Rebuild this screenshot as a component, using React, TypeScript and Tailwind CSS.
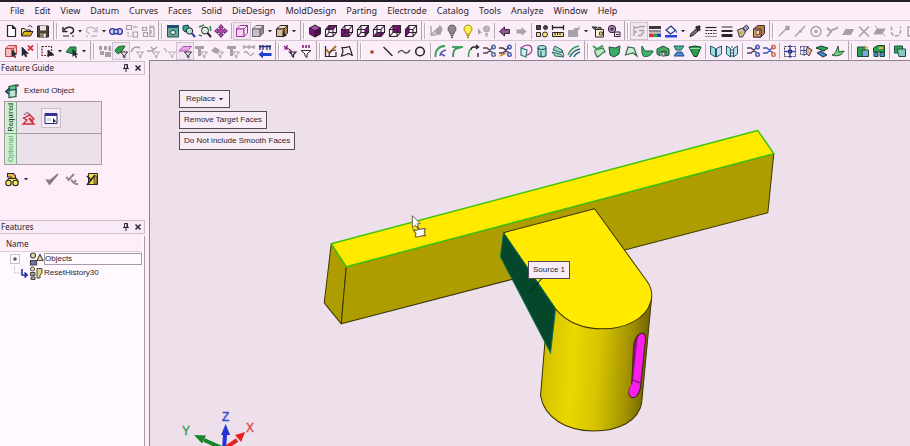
import type { ReactNode } from "react";
import clsx from "clsx";

const MENUS = [
  "File", "Edit", "View", "Datum", "Curves", "Faces", "Solid", "DieDesign",
  "MoldDesign", "Parting", "Electrode", "Catalog", "Tools", "Analyze", "Window", "Help",
];

const GRAY = "#a79fa8";
const INK = "#2c2430";
const PURPLE = "#7d1377";
const GREEN = "#2f9e50";
const BLUE = "#3546a8";

const cursor = <path d="M8.500 6v8l2-1.800 1.300 2.800 1.300-.6-1.300-2.600h2.400z" fill={INK} />;

function funnel(color: string) {
  return <path d="M7.500 9h7l-2.600 3v3l-1.600-1v-2z" fill="#fdf3fb" stroke={color} />;
}

// wireframe cube with one face filled
function faceCube(face: string) {
  return (
    <g stroke={INK} strokeWidth="1.100" fill="none">
      <path d={face} fill={PURPLE} stroke="none" />
      <path d="M2.500 6.500h7.500v7h-7.500zM6 2.500h7.500v7H6zM2.500 6.500L6 2.500M10 6.500l3.500-4M10 13.500l3.500-4M2.500 13.500L6 9.500" />
    </g>
  );
}

function cube(top: string, left: string, right: string, line: string) {
  return (
    <g stroke={line} strokeWidth="1">
      <path d="M2.500 6l3.500-3.500h7.500L10 6z" fill={top} />
      <path d="M2.500 6H10v7.500H2.500z" fill={left} />
      <path d="M10 6l3.500-3.500V10L10 13.500z" fill={right} />
    </g>
  );
}

function bulb(fill: string, line: string) {
  return (
    <g>
      <path d="M8 2a4 4 0 0 0-2.400 7.200L6.200 11h3.600l.6-1.800A4 4 0 0 0 8 2z" fill={fill} stroke={line} />
      <path d="M6.500 12.500h3M7 14.500h2" stroke={line} strokeWidth="1.400" />
    </g>
  );
}

function scissors(blade: string, handle: string) {
  return (
    <g fill="none" strokeWidth="1.400">
      <path d="M2 5h4l6 5M2 10h4l6-6" stroke={blade} />
      <circle cx="12.500" cy="4" r="1.800" stroke={handle} />
      <circle cx="12.500" cy="11.500" r="1.800" stroke={handle} />
    </g>
  );
}

const ICONS: Record<string, ReactNode> = {
  file: <path d="M4.500 2.500h5l3 3v8h-8zM9.500 2.500v3h3" fill="#fff" stroke={INK} strokeWidth="1.200" />,
  open: (
    <g stroke={INK}>
      <path d="M2.500 13V5.500h3l1 1.500h5v2" fill="#f5e58c" />
      <path d="M2.500 13l2.500-4.500h9L11.500 13z" fill="#d8b21e" />
      <path d="M9 4c1.500-2 3.500-1.500 4 .5" fill="none" />
    </g>
  ),
  save: (
    <g>
      <path d="M2.500 3h11v11h-11z" fill="#46413a" stroke={INK} />
      <path d="M5 3h6v4.500H5z" fill="#e8e3dc" />
      <path d="M5 10h6v4H5z" fill="#8c8460" />
      <path d="M9 11h1.500v3H9z" fill="#fff" />
    </g>
  ),
  undo: (
    <g fill="none" stroke={INK} strokeWidth="1.500">
      <path d="M4 7.500C6 3 13 3.500 13.500 7c.3 2-1.500 3.500-3.500 3.500" />
      <path d="M3 4v4.500h4.500" />
      <path d="M3 13h6M12 13h2" stroke="#6e6670" />
    </g>
  ),
  redo: (
    <g fill="none" stroke="#c6bbc6" strokeWidth="1.400">
      <path d="M12 7.500C10 3 3 3.500 2.500 7c-.3 2 1.500 3.500 3.500 3.500" />
      <path d="M13 4v4.500H8.500" />
      <path d="M2 13h2M7 13h6" />
    </g>
  ),
  link: (
    <g fill="#cfd4f4" stroke="#31349a" strokeWidth="1.300">
      <circle cx="4.500" cy="8.500" r="2.900" />
      <circle cx="11.500" cy="8.500" r="2.900" />
      <circle cx="8" cy="8.500" r="2.200" />
    </g>
  ),
  copyGray: (
    <g fill="none" stroke={GRAY} strokeWidth="1.200">
      <path d="M2.500 2.500h5v4h-5zM9 9h4.500v5H9z" />
      <path d="M9 4h5M4 9v4h3M11 3v3" strokeDasharray="2 1" />
    </g>
  ),
  treeGray: (
    <g fill="none" stroke={GRAY} strokeWidth="1.200">
      <path d="M2.500 4.500h4v3h-4zM3.500 9.500h4v4h-4zM10 4.500h4v9h-4z" />
      <path d="M9 3h5M11 7v4" />
    </g>
  ),
  fit: (
    <g>
      <path d="M2.500 2.500h11v11.500h-11z" fill="#6ea597" stroke="#1b5a5c" />
      <path d="M2 2h12v3H2z" fill="#1d4f72" />
      <circle cx="8" cy="9.500" r="2.300" fill="#e8fbf0" stroke="#154c4c" />
    </g>
  ),
  zoomShade: (
    <g>
      <path d="M2 3l5-1 2 4-5 3-2-2z" fill="#38a58a" stroke="#174b4a" />
      <circle cx="8.500" cy="8" r="3.200" fill="#a7e2d1" stroke={INK} />
      <path d="M11 10.500l3 3.500" stroke={BLUE} strokeWidth="2.200" />
    </g>
  ),
  zoomArea: (
    <g fill="none" stroke={INK}>
      <path d="M2 4l5-2M2 12l3 1M13 3l1 5" stroke="#2d8f56" strokeWidth="1.600" />
      <circle cx="8" cy="7.500" r="3.500" fill="#d9f2e0" />
      <path d="M10.500 10l3.500 4" strokeWidth="2" />
    </g>
  ),
  pan: (
    <g fill="#b64bb2" stroke="#4a1a55" strokeWidth=".8">
      <path d="M8 1.500l2.500 3h-1.300v2.300h2.300V5.500l3 2.500-3 2.500V9.200H9.200v2.300h1.300l-2.500 3-2.500-3h1.300V9.200H4.500v1.300L1.500 8l3-2.500v1.300h2.300V4.500H5.500z" />
    </g>
  ),
  wire: cube("#fdeefa", "#f6d8f2", "#fdeefa", "#a0309b"),
  shaded: cube("#e4dfe4", "#c7c0c8", "#8f8791", "#6e6670"),
  pickBox: (
    <g>
      {cube("#f7dcb8", "#dcbd95", "#b08a55", INK)}
      <path d="M8.500 7.500v7l2-1.500h2.500z" fill={INK} />
    </g>
  ),
  iso: (
    <g stroke={INK}>
      <path d="M8 2l5.500 3L8 8 2.500 5z" fill="#a94ba4" />
      <path d="M2.500 5L8 8v6l-5.500-3z" fill={PURPLE} />
      <path d="M13.500 5L8 8v6l5.500-3z" fill="#560b55" />
    </g>
  ),
  top: faceCube("M2.500 6.500L6 2.500h7.500l-3.500 4z"),
  front: faceCube("M2.500 6.500H10v7H2.500z"),
  right: faceCube("M10 6.500l3.500-4v7l-3.500 4z"),
  bottom: faceCube("M2.500 13.500L6 9.500h7.500l-3.500 4z"),
  back: faceCube("M6 2.500h7.500v7H6z"),
  left: faceCube("M2.500 6.500L6 2.500v7l-3.500 4z"),
  axesGray: (
    <g fill="none" stroke={GRAY} strokeWidth="1.300">
      <path d="M3 3v9h5M3 12l5-5" />
      <path d="M8 8c1-4 3-2 4-5l2 3-2 5H8z" fill={GRAY} />
    </g>
  ),
  bulbOff: bulb("#8d858f", "#5e5660"),
  bulbOn: bulb("#fff04a", "#a4890f"),
  bulbPick: (
    <g>
      <path d="M2 5v7l2-2h2z" fill={GRAY} />
      <circle cx="10.500" cy="6" r="3" fill="#bfb5c0" stroke={GRAY} />
      <path d="M9 11h3M9.500 13h2" stroke={GRAY} strokeWidth="1.300" />
    </g>
  ),
  prev: <path d="M2.500 8.500L7.500 4v2.500h5v4h-5V13z" fill="#8d5a8b" stroke="#3f2344" />,
  next: <path d="M13.500 8.500L8.500 4v2.500h-5v4h5V13z" fill="#a9a0aa" />,
  swap: (
    <g stroke={INK}>
      <path d="M2.500 2.500h4v4h-4z" fill="#4b4550" />
      <circle cx="11.500" cy="4.500" r="2" fill="#4b4550" />
      <path d="M2.500 9.500h4v4h-4z" fill="#f5e26a" />
      <circle cx="11" cy="11.500" r="2.500" fill="#f5e26a" />
    </g>
  ),
  measure: (
    <g>
      <path d="M2.500 2v5M13.500 2v5M3 4.500h10" stroke={INK} strokeWidth="1.300" />
      <path d="M2.500 9.500h11v4h-11z" fill="#f3e08a" stroke={INK} />
      <path d="M5 10v2M7.500 10v2M10 10v2" stroke={INK} />
    </g>
  ),
  blockGray: <path d="M2 7h5l1.500-2h3l2-2.500V7H12v7H2z" fill="#a9a1aa" />,
  paste: (
    <g stroke={INK}>
      <path d="M2 4h5l-2 2.500z" fill="#2d8f56" />
      <path d="M5.500 6.500h8v7.500h-8z" fill="#fbf3d6" />
      <path d="M8 4.500h3v2H8z" fill="#cfae45" />
      <path d="M9.500 9h3v3h-3z" fill="#e6cf6f" strokeWidth=".8" />
    </g>
  ),
  inspect: (
    <g stroke={INK}>
      <circle cx="6" cy="6" r="3.700" fill="#b68ac0" />
      <path d="M4 6h4M6 4v4" />
      <path d="M8.500 9h5.500v4.500H8.500z" fill="#e9ddec" />
      <path d="M10 11.500h3" stroke={PURPLE} />
    </g>
  ),
  filterGray: (
    <g fill="none" stroke={GRAY} strokeWidth="1.300">
      <path d="M3 3v10M3 4.500h5M3 9h3" />
      <path d="M8 3.500h6M8 7.500h5M7 12.500h3l3-4" />
    </g>
  ),
  palette: (
    <g>
      <path d="M2 3h12v3H2z" fill="#3c363d" />
      <path d="M2 7h12v2.500H2z" fill="#8e8890" />
      <path d="M2 10.500h4V14H2z" fill="#d63434" />
      <path d="M6 10.500h4V14H6z" fill="#2fa34b" />
      <path d="M10 10.500h4V14h-4z" fill="#2e46c5" />
    </g>
  ),
  bucket: (
    <g>
      <path d="M3 7l5-4 4.500 4.500L7.500 11z" fill="#f0f2ff" stroke="#27337f" strokeWidth="1.200" />
      <path d="M12 6c2 1.500 2.500 3 1.500 4.500z" fill="#2e46c5" />
      <path d="M2 12h12v2.500H2z" fill="#2946d8" />
    </g>
  ),
  dropper: (
    <g>
      <path d="M3 13.500l1-3 5-4.500 2 2-5 4.500z" fill="#77707a" stroke={INK} />
      <path d="M9 3.500l4 4M10.500 5.500L13 3" stroke={INK} strokeWidth="2.600" />
    </g>
  ),
  lineStyle: (
    <g stroke={INK} strokeWidth="1.200">
      <path d="M2.500 4.500h11" />
      <path d="M2.500 7.500h11" strokeDasharray="3 1" />
      <path d="M2.500 10.500h11" strokeDasharray="1.500 1" />
      <path d="M2.500 13.500h11" strokeDasharray="1 1" />
    </g>
  ),
  lineWeight: (
    <g stroke={INK}>
      <path d="M2.500 4h11" />
      <path d="M2.500 8h11" strokeWidth="2" />
      <path d="M2.500 12.500h11" strokeWidth="3" />
    </g>
  ),
  brush: (
    <g stroke={INK} strokeWidth=".9">
      <path d="M2.500 7l5-2 3 4-3 5h-3z" fill="#c9bfa8" />
      <path d="M8 5l3.500-3L14 5l-3.500 3.500z" fill="#8fa2c2" />
      <path d="M5 9l2 2" stroke="#d0a72c" strokeWidth="2" />
    </g>
  ),
  gold: (
    <g stroke="#3b2a44">
      <path d="M2.500 6l4-3.500h7v8L10 14H2.500z" fill="#b97c35" />
      <path d="M2.500 6H10v8H2.500z" fill="#eba24a" />
      <path d="M5 7.500h3.500v4H5z" fill="#fbdba3" stroke="#5d5580" />
    </g>
  ),
  snapEnd: <path d="M3 13l8-8M10 3.500h3v3h-3z" stroke={GRAY} fill={GRAY} strokeWidth="1.300" />,
  snapMid: <path d="M3 13.500L13 3M7 7.500l3 2" stroke={GRAY} strokeWidth="1.400" fill="none" />,
  snapCenter: (
    <g>
      <circle cx="8" cy="8.500" r="5" fill="none" stroke={GRAY} strokeWidth="1.400" />
      <path d="M6.500 7h3v3h-3z" fill={GRAY} />
    </g>
  ),
  snapOn: <path d="M3 13c3-1 3-5 5-6s4 0 6-3M3 5l5 4" stroke={GRAY} strokeWidth="1.800" fill="none" />,
  snapFace: <path d="M2 12l3.500-6H14l-3 6z" fill={GRAY} />,
  snapCross: <path d="M3 3.500l10 10M13 3.500l-10 10" stroke={GRAY} strokeWidth="1.600" />,
  snapPierce: <path d="M2 11l3-5h8l-3 5zM3 3l10 10" fill={GRAY} stroke={GRAY} />,
  snapArc: <path d="M3.500 3.500v5c0 6 9 6 9 0v-5" stroke={GRAY} strokeWidth="1.500" strokeDasharray="4 1.500" fill="none" />,
  snapBox: <path d="M4 4h9v9H4z" stroke={GRAY} strokeWidth="1.400" fill="none" />,

  pickAll: (
    <g>
      <path d="M2.500 5.500l3-3h8v8l-3 3h-8zM2.500 5.500h8v8M10.500 5.500l3-3" fill="#f5bcbc" stroke="#cf4242" />
      {cursor}
    </g>
  ),
  unpick: (
    <g>
      <path d="M3 4v9l2-2 1.500 3 1.500-.7-1.400-2.800h2.800z" fill={INK} stroke={INK} strokeWidth=".6" />
      <path d="M9 2.500l5 5M14 2.500l-5 5" stroke="#d23b3b" strokeWidth="1.800" />
    </g>
  ),
  pickRect: (
    <g>
      <path d="M2 3.500h9.500v9H2z" fill="none" stroke="#6d2b3a" strokeWidth="1.200" strokeDasharray="2 1" />
      <path d="M8 7v7l2-2h4z" fill={INK} stroke={INK} />
    </g>
  ),
  pickFace: (
    <g>
      <path d="M2 9l4-5h6v5l-3 2z" fill={GREEN} stroke="#176b36" />
      {cursor}
    </g>
  ),
  blocksGray: <path d="M2 3h3v4H2zM7 3h3v4H7zM11.500 3h2.500v5h-2.500zM3 8h4v4H3zM8 9h6v5H8z" fill={GRAY} />,
  filterGreen: <g><path d="M2 8c2-5 5-5 10-5l-3 5-4 3z" fill={GREEN} stroke="#176b36" />{funnel(INK)}</g>,
  filterCurve: <g><path d="M2 9c2-5 5-6 9-4" fill="none" stroke={GRAY} strokeWidth="1.500" />{funnel(GRAY)}</g>,
  filterEdge: <g><path d="M2 8h5l5-4M6 4l3 3" fill="none" stroke={GRAY} strokeWidth="1.500" />{funnel(GRAY)}</g>,
  filterPoint: <g><path d="M3 5l3 4" fill="none" stroke="#c5bbc6" strokeWidth="1.500" />{funnel("#b9afba")}</g>,
  filterPink: <g><path d="M2 8l4-4.500h8.500l-4 4.500z" fill="#e7a6e6" stroke="#b351b3" />{funnel(INK)}</g>,
  filterText: <g><path d="M2 3h9v3H8v7H5V6H2z" fill={GRAY} />{funnel(GRAY)}</g>,
  filterTag: <g><path d="M2 8l4-4 5 3-3 4z" fill={GRAY} />{funnel(GRAY)}</g>,
  filterDim: (
    <g stroke={GRAY} fill="none">
      <path d="M2 4h12M3 2v4M8 2v4M13 2v4M3 9h3l2 3M9 13l4-3" strokeWidth="1.300" />
    </g>
  ),
  swapBlue: (
    <g>
      <path d="M2 3.500h12M3 2v5M6 2v5M10 2v5M13 2v5" stroke="#24306e" strokeWidth="1.300" />
      <path d="M1.500 11.500l4.500-4v2.500h8.500v3H6v2.500z" fill="#1f3fd0" />
    </g>
  ),
  filterPick: (
    <g fill="none" stroke={PURPLE} strokeWidth="1.200">
      <path d="M2 3l3 3M5 2v4M2 6h5l3 3" />
      <path d="M7.500 9H14l-2.500 2.500V14l-1.500-1v-1.500z" stroke={INK} />
    </g>
  ),
  filterAll: (
    <g fill="none" stroke={INK}>
      <path d="M3 7.500h10l-4 3.500v3.500l-2-1.500v-2z" fill="#fff" />
      <path d="M5 2v3M8 2v3M11 2v3" stroke={PURPLE} strokeWidth="1.500" />
    </g>
  ),
  sketch: (
    <g fill="none" stroke={INK} strokeWidth="1.200">
      <path d="M2.500 3v10.500H13V9" />
      <path d="M3 6l3 4 7-7" stroke="#b46b25" strokeWidth="1.800" />
      <path d="M6 13c0-4 3-6 7-6" />
    </g>
  ),
  outline: <path d="M2.500 13L4 8.500 3 4.500c3 .5 5 0 7.500-1l3 9.500c-2-2.500-4-3-6-1.500z" fill="#f8eef8" stroke={INK} strokeWidth="1.200" />,
  dot: <path d="M6.500 7.500h3v3h-3z" fill="#a5301a" />,
  line: <path d="M3.500 4l9 9" stroke={INK} strokeWidth="1.400" />,
  curve: <path d="M2 10c2-3 4-3 6-1s4 1 6-2" stroke="#55505a" strokeWidth="1.500" fill="none" />,
  circle: <circle cx="8" cy="8.500" r="4.300" stroke={INK} strokeWidth="1.600" fill="none" />,
  arcs: (
    <g fill="none" strokeWidth="1.800">
      <path d="M2.500 14C2 7 6 3 12 3" stroke={GREEN} />
      <path d="M7 13c0-3 2-5 6-6M8 11l4 2" stroke="#4a57ac" strokeWidth="1.400" />
    </g>
  ),
  corner: (
    <g fill="none" strokeWidth="1.800">
      <path d="M3 4h11" stroke={GREEN} />
      <path d="M4 14C4 8 5 5 12 4.500" stroke="#3c9a52" />
    </g>
  ),
  extendCurve: (
    <g fill="none" strokeWidth="1.400">
      <path d="M6 7c0-2 1-3 3-3h4M11 2l2.500 2L11 6M13 10v4" stroke={INK} />
      <path d="M3.500 14c0-4 0-7 2.500-8" stroke={GREEN} />
    </g>
  ),
  trimCurve: scissors("#4f4a58", "#4a6aa8"),
  trimTwo: <g>{scissors("#3d3846", "#3b56b0")}<path d="M3 13l6-3" stroke="#d08a2a" strokeWidth="1.500" /></g>,
  loft: (
    <g fill="#d9efe8" strokeWidth="1.200">
      <path d="M3 5l6 2-1 7-5-2z" stroke="#2d7a76" />
      <path d="M3 5l4-2.500c4-1 7 0 7 4s-3 5-6 6" fill="none" stroke="#963c9e" />
    </g>
  ),
  cylinder: (
    <g fill="#a9dfd2" stroke="#24606e" strokeWidth="1.200">
      <path d="M4 5v7c1 2.500 7 2.500 8 0V5" />
      <ellipse cx="8" cy="4.500" rx="4" ry="2" />
      <path d="M7 8v5" />
    </g>
  ),
  layers: (
    <g fill="#9bd9b6" stroke="#2d6a6a">
      <path d="M5 3l7 4v3L3 7z" />
      <path d="M2 9l8 2 4 3-9-1zM12 7l2 6" />
    </g>
  ),
  sweep: (
    <g fill="none" strokeWidth="1.500">
      <path d="M2 12C4 7 7 4 13 3" stroke={GREEN} />
      <path d="M4 14c2-5 5-7 10-8M8 14c1-3 3-4 6-5" stroke="#2b6f70" />
    </g>
  ),
  faceGreen: (
    <g stroke="#267a44" strokeWidth="1.200">
      <path d="M4 7l8-2 2 4c-3 0-4 4-8 5-1-3-3-3-2-7z" fill="#bfe8c6" />
      <path d="M2 3l4 3 6-3.500" fill="none" stroke={GREEN} strokeWidth="1.600" />
    </g>
  ),
  faceTwo: <path d="M2 4l6 1 5-2-1 8-5 3-4-2z" fill="#3faa62" stroke="#1d5348" />,
  faceArc: <path d="M2.500 12L5 4l6 1 3 8-4-3z" fill="#cdebd2" stroke="#2f6b50" strokeWidth="1.200" />,
  faceSplit: <path d="M3 3l3 5h8c-1 4-5 6-9 5.500-2-1-2.500-5-2-10.500z" fill="#43b168" stroke="#1c5d48" />,
  faceBox: <g stroke="#1d4f3d"><path d="M2 6l6-3 6 3v6l-3 1V8L5 9v4l-3-2z" fill="#4aaa61" /><path d="M7 9h3v4H7z" fill="#e9d9ee" /></g>,
  faceStack: <g stroke="#1d4f7d"><path d="M3 3h10l-3 4H5z" fill="#55b774" /><path d="M3 13h10l-2-4H6z" fill="#4c8bd0" /></g>,
  faceFan: <g stroke="#123f2b"><path d="M2 4l6-1 6 1-4 9.500H7z" fill="#2c9c4d" /><path d="M3 5.500h10" fill="none" stroke="#9be0a8" /></g>,
  book: <g stroke="#2b5670"><path d="M2.500 3l5 2.500V14l-5-3z" fill="#9edbd2" /><path d="M13.500 3l-5 2.500V14l5-3z" fill="#c9dff0" /></g>,
  bookDots: <g stroke="#2b5670"><path d="M2.500 3l4 2.500V14l-4-3zM13.500 3l-4 2.500V14l4-3z" fill="#b6dfe5" /><path d="M8 3v11" strokeDasharray="2 1" /></g>,
  trimFace: scissors("#4a4560", "#3f57c0"),
  trimFaceRed: scissors("#3f57c0", "#d2653c"),
  grid: (
    <g fill="none" stroke="#39345a">
      <path d="M2.500 3.500h11v10h-11z" strokeDasharray="2 1" />
      <path d="M8 2v13M2 8.500h12" stroke="#3950b8" strokeWidth="1.600" />
      <path d="M6.500 7h3v3h-3z" fill="#3950b8" />
    </g>
  ),
  gridPick: (
    <g fill="none" stroke="#4a4560">
      <path d="M2.500 3.500h8v8h-8z" strokeDasharray="2 1" />
      <path d="M6 3v10M2 7.500h12" stroke="#3950b8" />
      <path d="M9 4l5 3-3 6-3-3z" fill="#e3b886" />
    </g>
  ),
  morph: <g stroke="#123f2b"><path d="M2 5l5-2 7 2-4 3z" fill="#37a355" /><path d="M3 10l4-2 6 4-4 2z" fill="#4c7fd0" /></g>,
  leaf: <path d="M2 12c3-1 4-3 6-9l1 6 5-1c-2 4-6 6-12 4z" fill="#79c878" stroke="#1e5c38" />,
  assembly: <g stroke="#174f2e"><path d="M2.500 4h8v9.500h-8z" fill="#2ea04f" /><path d="M7 7h6.500v6.500H7z" fill="#7fa6d8" /><path d="M10 2l4 3-4 1.500z" fill="#f0b04a" stroke="none" /></g>,
  assemblyTwo: <g stroke="#174f2e"><path d="M2.500 5l4-2.500h7V9H2.500z" fill="#2ea04f" /><path d="M3 9.500h4v4H3zM9 9.500h4.500v4H9z" fill="#5b83cf" /><path d="M8 4h4v2H8z" fill="#f0b04a" stroke="none" /></g>,
  solid: <g stroke="#174f4a"><path d="M2.500 3h8v7h-8z" fill="#3aa85b" /><path d="M5 6h8.500v7.500H7z" fill="#86c9c0" /></g>,

  extend: (
    <g stroke="#1b4f3c" strokeWidth="1.200">
      <path d="M5 3.500l7-1.500v8l-6 1.500z" fill="#5ec48a" />
      <path d="M5 7.500l7-1v7l-7 1z" fill="#bfe6d6" />
      <path d="M6 5L2 8.500l3 2.500" fill="none" stroke="#12505a" strokeWidth="1.800" />
      <path d="M12.500 2.500h2" stroke={INK} strokeWidth="2" />
    </g>
  ),
  target: (
    <g fill="none" stroke="#cf2b3d" strokeWidth="1.300">
      <path d="M2 8c4 0 4-3 7-3l4 4-3 2 3 3H2l4-4z" fill="#f3d3d6" />
      <path d="M3 5l3-2.500L9 4" stroke="#8a7d86" />
      <path d="M8 8l4 4" strokeWidth="2" />
    </g>
  ),
  form: (
    <g>
      <path d="M2 3.500h12v10H2z" fill="#fff" stroke="#262b72" />
      <path d="M2 3h12v3H2z" fill="#2c3390" />
      <path d="M4 8h4v3H4z" fill="#d3d5ea" />
      <path d="M10 8v5l1.500-1.300h2z" fill={INK} />
    </g>
  ),
  glasses: (
    <g stroke={INK} strokeWidth="1.100">
      <path d="M3.500 2.500h6l2 2.500v3.500h-3L7 6H3.500z" fill="#e9bd52" />
      <path d="M2.500 11l2-3.500h8l2 3.500" fill="#f2ea55" />
      <circle cx="4.500" cy="12" r="2.700" fill="#f2ea55" />
      <circle cx="11.500" cy="12" r="2.700" fill="#f2ea55" />
    </g>
  ),
  ok: <path d="M2.500 9l3 4.500L14 3l-8 6.500z" fill="#857c86" stroke="#857c86" strokeWidth="1.300" />,
  apply: (
    <g fill="none" stroke="#8f8690" strokeWidth="2">
      <path d="M2.500 6l2 3L10 3" />
      <path d="M7 9l3 3 2-3M11 13h3" />
    </g>
  ),
  cancel: (
    <g stroke={INK}>
      <path d="M4.500 2.500h9v11h-9z" fill="#f5dc3e" />
      <path d="M10 5h3v8h-3z" fill="#b09a27" strokeWidth=".6" />
      <path d="M3 5l4 4-4 5M7 9l4-5" fill="none" strokeWidth="1.700" />
    </g>
  ),
  objects: (
    <g stroke="#4b4650" strokeWidth="1.200">
      <circle cx="5" cy="4.500" r="2.500" fill="#e3dfa0" />
      <path d="M2.500 9.500h6v4.500h-6z" fill="#78729c" />
      <path d="M9 9.500l3-6 3 6z" fill="#f5e68a" />
    </g>
  ),
  history: (
    <g stroke="#4b4650">
      <circle cx="4.500" cy="4" r="2" fill="#f3e7a0" />
      <path d="M2.500 7.500h4.500v3H2.500zM3 12h4v2.500H3z" fill="#a9a28a" />
      <path d="M9 3.500h5V8l-2 2v3H9z" fill="#e8d27a" />
    </g>
  ),
};

function Icon({ name }: { name: string }) {
  return (
    <svg className="size-4 shrink-0" viewBox="0 0 16 16" fill="none" aria-hidden="true">
      {ICONS[name]}
    </svg>
  );
}

function Caret() {
  return (
    <svg className="size-2 shrink-0" viewBox="0 0 8 8" aria-hidden="true">
      <path d="M2 3h4L4 5.500z" fill={INK} />
    </svg>
  );
}

// "|" thin divider, "||" end of one bar and grip of the next, "v" caret, "*" pressed
const ROW_ONE =
  "file open save || undo v redo v link copyGray treeGray || fit zoomShade zoomArea pan | *wire shaded v pickBox v || iso top front right bottom back left || axesGray bulbOff bulbOn bulbPick | prev next | swap measure blockGray v paste inspect || *filterGray palette bucket v dropper lineStyle lineWeight brush gold || snapEnd snapMid snapCenter snapOn snapFace snapCross snapPierce snapArc snapBox";
const ROW_TWO =
  "pickAll unpick | pickRect v pickFace v || blocksGray *filterGreen filterCurve filterEdge filterPoint *filterPink filterText filterTag filterText filterDim swapBlue || filterPick filterAll || sketch outline || dot line curve circle | arcs corner extendCurve trimCurve trimTwo | loft cylinder layers sweep || faceGreen faceTwo faceArc faceSplit faceBox faceStack faceFan | book bookDots | trimFace trimFaceRed | grid gridPick morph leaf || assembly assemblyTwo | solid";

function Toolbar({ label, items }: { label: string; items: string }) {
  return (
    <div role="toolbar" aria-label={label} className="flex h-5 items-center overflow-hidden border-t border-[#d5c8d3] pl-[3px]">
      {items.split(" ").map((item, i) => {
        if (item === "|") return <span key={i} className="mx-0.5 h-4 w-px shrink-0 bg-[#b9adb8]" />;
        if (item === "||") {
          return (
            <span key={i} className="flex h-5 w-[9px] shrink-0 justify-between px-0.5">
              <span className="w-px bg-[#b0a4af]" />
              <span className="my-0.5 w-0.5 border-l border-[#b9adb8] bg-white" />
            </span>
          );
        }
        if (item === "v") return <Caret key={i} />;
        const name = item.replace("*", "");
        return (
          <button
            key={i}
            type="button"
            aria-label={name}
            aria-pressed={item !== name}
            className={clsx("size-4 shrink-0", item !== name && "bg-[#f3e5f1] outline outline-[#cfc2ce]")}
          >
            <Icon name={name} />
          </button>
        );
      })}
    </div>
  );
}

function PanelHeader({ title }: { title: string }) {
  return (
    <div className="mr-1 flex h-3.5 items-center justify-between border border-l-0 border-[#cbbfca] bg-[#f8eaf6] pr-0.5 pl-px">
      <h2 className="font-['Noto_Sans'] text-[8px] leading-3">{title}</h2>
      <div className="flex gap-1">
        <button type="button" aria-label={`Pin ${title}`}>
          <svg className="size-2" viewBox="0 0 8 8" fill="none" stroke={INK}>
            <path d="M2.500 .5h3v4h-3zM5 .5v4M1 4.500h6M4 5v3" />
          </svg>
        </button>
        <button type="button" aria-label={`Close ${title}`}>
          <svg className="size-2" viewBox="0 0 8 8" fill="none" stroke={INK} strokeWidth="1.500">
            <path d="M1.500 1.500l5 5M6.500 1.500l-5 5" />
          </svg>
        </button>
      </div>
    </div>
  );
}

function FeatureGuide() {
  return (
    <section className="h-40 shrink-0 pt-px">
      <PanelHeader title="Feature Guide" />
      <div className="mt-2 ml-1 flex items-center gap-1">
        <Icon name="extend" />
        <span className="text-[8px] leading-4">Extend Object</span>
      </div>
      <div className="mt-0.5 ml-1 grid w-[98px] grid-cols-[12px_1fr] border border-[#a59aa5] bg-[#ece0ea]">
        <span className="flex h-8 items-center justify-center border-r border-b border-[#8aa890] bg-[#c9f5cd]">
          <span className="rotate-180 text-[7px] leading-none [writing-mode:vertical-rl]">Required</span>
        </span>
        <div className="flex items-center gap-1 border-b border-[#a59aa5] pl-1">
          <button type="button" aria-label="Target">
            <Icon name="target" />
          </button>
          <button type="button" aria-label="Settings" className="border border-[#c9bdc9] bg-[#f6eaf5] p-px">
            <Icon name="form" />
          </button>
        </div>
        <span className="flex h-[30px] items-center justify-center border-r border-[#8aa890] bg-[#c9f5cd]">
          <span className="rotate-180 text-[7px] leading-none text-[#6f9175] [writing-mode:vertical-rl]">Optional</span>
        </span>
        <div />
      </div>
      <div className="mt-1.5 ml-1 flex items-center">
        <button type="button" aria-label="Preview" className="mr-3.5 flex items-center gap-0.5">
          <Icon name="glasses" />
          <Caret />
        </button>
        <div className="flex gap-1">
          <button type="button" aria-label="OK"><Icon name="ok" /></button>
          <button type="button" aria-label="Apply"><Icon name="apply" /></button>
          <button type="button" aria-label="Cancel"><Icon name="cancel" /></button>
        </div>
      </div>
    </section>
  );
}

function Features() {
  return (
    <section className="flex flex-1 flex-col">
      <PanelHeader title="Features" />
      <div className="mt-0.5 mr-1 flex-1 border-r border-[#a99daa] bg-[#fff8fe] pr-0.5">
        <div className="h-4 border-b border-[#ddd0db] bg-[#fdeefa] pt-0.5 pl-1.5 font-['Noto_Sans'] text-[8px] leading-3">
          Name
        </div>
        <ul className="text-[8px]">
          <li className="flex h-3.5 items-center pl-2.5">
            <button type="button" aria-label="Expand Objects" className="mr-2 flex size-2.5 items-center justify-center border border-[#cdbfcd]">
              <svg className="size-1.5" viewBox="0 0 6 6" stroke={INK}>
                <path d="M3 1v4M1 3h4" />
              </svg>
            </button>
            <Icon name="objects" />
            <span className="h-3 flex-1 border border-[#a79ba7] leading-[10px]">Objects</span>
          </li>
          <li className="flex h-3.5 items-center pl-3.5">
            <svg className="h-3.5 w-3.5 shrink-0" viewBox="0 0 14 14" fill="none">
              <path d="M.5 0v7H7" stroke="#b9aeb9" strokeDasharray="1 1" />
              <path d="M8 3v6h4M10.500 6.500L13 9l-2.500 2.500" stroke="#1f2f9c" strokeWidth="1.600" />
            </svg>
            <Icon name="history" />
            <span className="leading-3">ResetHistory30</span>
          </li>
        </ul>
      </div>
    </section>
  );
}

// extruded bar, rounded block and the axis triad
function Model() {
  return (
    <svg className="absolute inset-0 h-full w-full" viewBox="150 62 759 384" preserveAspectRatio="xMinYMax meet" role="img" aria-label="Model">
      <defs>
        <linearGradient id="side" x1="0" x2="1" y1="0" y2=".08">
          <stop offset="0" stopColor="#c2ae00" />
          <stop offset=".1" stopColor="#d9c500" />
          <stop offset=".32" stopColor="#ead700" />
          <stop offset=".55" stopColor="#d8c500" />
          <stop offset=".82" stopColor="#a59400" />
          <stop offset="1" stopColor="#6f6300" />
        </linearGradient>
      </defs>
      <g stroke="#3d3600" strokeLinejoin="round">
        <path d="M331 244l15 23-5 57-17-21z" fill="#ae9d00" />
        <path d="M346 267l427-113-6 59-426 111z" fill="#ae9d00" />
        <path d="M331 244l426-113 16 23-427 113z" fill="#ffea00" stroke="#3fc40f" strokeWidth="1.500" />
        <path d="M555 300l-10 35-5 61c4 22 26 35 53 35 25 0 45-10 48-28l10-106z" fill="url(#side)" />
        <path d="M503 233l91-24 52 72c5 7 6 15 4 21-5 18-27 27-48 27s-37-8-47-20z" fill="#ffea00" />
      </g>
      <path d="M503 233l52 76-5 44-50-96z" fill="#04472a" stroke="#08704f" />
      <path d="M529 292l14-15" stroke="#00280f" />
      <path d="M639 334c4-2 6 0 6 4l-5 50c-2 8-6 11-10 9-3-2-2-8 1-12l2-40c1-5 3-9 6-11z" fill="#8f127f" stroke="#3d2d10" />
      <path d="M637 339c1-4 4-6 6-4 2 1 1 4 1 7l-5 46c-2 7-5 10-8 9-4-2-3-9 1-14z" fill="#fb1fee" />
      <path d="M632 380l7 3" stroke="#5e075c" />
      <g strokeWidth="4">
        <path d="M224 449l1-16" stroke="#2434d4" />
        <path d="M224 449l13-9" stroke="#e5231c" />
        <path d="M224 449l-20-9" stroke="#14852b" />
      </g>
      <path d="M225.500 424l4.500 11h-9z" fill="#2434d4" />
      <path d="M245 432l-4 10-6-7z" fill="#e5231c" />
      <path d="M194 435l12 .5-4 8z" fill="#14852b" />
      <g className="font-['Liberation_Sans'] text-[12px]" strokeWidth=".4">
        <text x="222" y="421" fill="#3a47d0" stroke="#3a47d0">Z</text>
        <text x="182" y="435" fill="#3d9a4e" stroke="#3d9a4e">Y</text>
        <text x="246" y="432" fill="#e04848" stroke="#e04848">X</text>
      </g>
      <path d="M416 225l3 6" stroke="#5c5148" strokeWidth="1.600" />
      <path d="M412 216v12l3-2.500 1 1.500 2-1-1-2h3z" fill="#fff" stroke="#5c5148" strokeWidth=".9" />
      <path d="M413 230c4 2 6-2 12-1l-1 3 1 4c-4-1-6 2-10 1l.5-3z" fill="#fffdf4" stroke="#6e6440" strokeWidth="1.200" />
    </svg>
  );
}

const OPTION = "border border-[#544b56] bg-[#f8edf6] px-1 text-[8px] leading-4";

export default function App() {
  return (
    <div className="flex min-h-screen flex-col overflow-hidden bg-[#fdeefa] font-['Liberation_Sans',sans-serif] text-[#2c2430]">
      <header className="border-t-2 border-[#241f2b] bg-[#fbeef9]">
        <nav className="flex h-[18px] items-center gap-2.5 pl-2.5 font-['Noto_Sans'] text-[9px]">
          {MENUS.map((menu) => (
            <button key={menu} type="button">{menu}</button>
          ))}
        </nav>
        <Toolbar label="Standard" items={ROW_ONE} />
        <Toolbar label="Modeling" items={ROW_TWO} />
      </header>
      <div className="flex flex-1">
        <aside className="flex w-[149px] shrink-0 flex-col">
          <FeatureGuide />
          <Features />
        </aside>
        <main className="relative flex-1 border-t border-l border-[#8b808c] bg-[#ede0ea]">
          <Model />
          <div className="relative flex flex-col items-start gap-[3px] pt-[29px] pl-[29px]">
            <button type="button" className="flex items-center gap-0.5 border border-[#544b56] bg-[#f8edf6] pr-1 pl-1.5 text-[8px] leading-4">
              Replace
              <Caret />
            </button>
            <button type="button" className={OPTION}>Remove Target Faces</button>
            <button type="button" className={OPTION}>Do Not include Smooth Faces</button>
          </div>
          <span className="absolute top-[200px] left-[378px] border border-[#544b56] bg-[#f8edf6] px-1 text-[8px] leading-4">
            Source 1
          </span>
        </main>
      </div>
    </div>
  );
}
